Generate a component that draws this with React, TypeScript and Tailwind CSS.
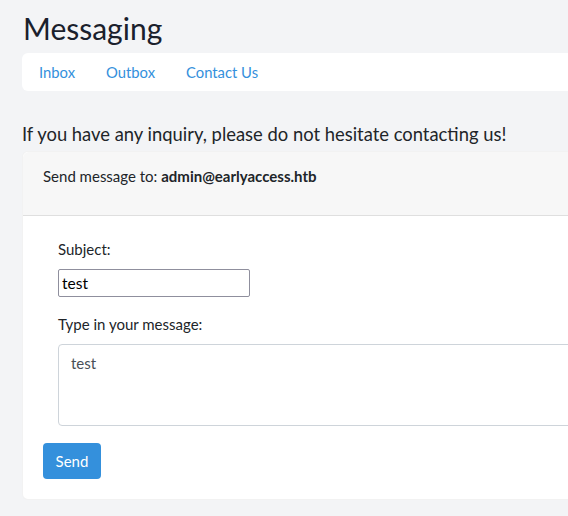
export default function App() {
  return (
    <div className="min-h-screen bg-[#f3f4f6] pl-[22px] text-[#212529] font-['Lato',sans-serif] overflow-hidden">
      <h1 className="pt-[8px] pl-[1px] text-[30px] leading-[40px] text-[#1a202c]">Messaging</h1>
      <nav className="mt-[5px] flex h-[38px] w-[600px] items-center rounded-md bg-white pl-[17px] text-[14.8px] text-[#3490dc]">
        <a className="mr-[31px]">Inbox</a>
        <a className="mr-[31px]">Outbox</a>
        <a>Contact Us</a>
      </nav>
      <p className="mt-[30px] text-[18.4px] leading-[26px]">If you have any inquiry, please do not hesitate contacting us!</p>
      <div className="mt-[4px] w-[620px] rounded-md border border-[#0000000d] bg-white">
        <div className="h-[64px] rounded-t-md border-b border-[#dfdfdf] bg-[#f7f7f7] pl-[20px] pt-[13px] text-[15px]">
          Send message to: <span className="font-bold">admin@earlyaccess.htb</span>
        </div>
        <div className="px-[20px] pb-[20px] pt-[23px]">
          <div className="pl-[15px]">
            <label className="block text-[15px] leading-[20px]">Subject:</label>
            <input
              defaultValue="test"
              className="mt-[10px] block h-[28px] w-[192px] rounded-[2px] border border-[#8f8f9d] px-[3px] text-[15.5px] text-black outline-none"
            />
            <label className="mt-[17px] block text-[15px] leading-[20px]">Type in your message:</label>
            <textarea
              defaultValue="test"
              className="mt-[10px] block h-[82px] w-full resize-none rounded-[4px] border border-[#ced4da] px-[12px] py-[7px] text-[15px] text-[#495057] outline-none"
            />
          </div>
          <button className="mt-[17px] h-[36px] w-[58px] rounded-[4px] bg-[#3490dc] text-[15px] text-white">Send</button>
        </div>
      </div>
    </div>
  );
}
